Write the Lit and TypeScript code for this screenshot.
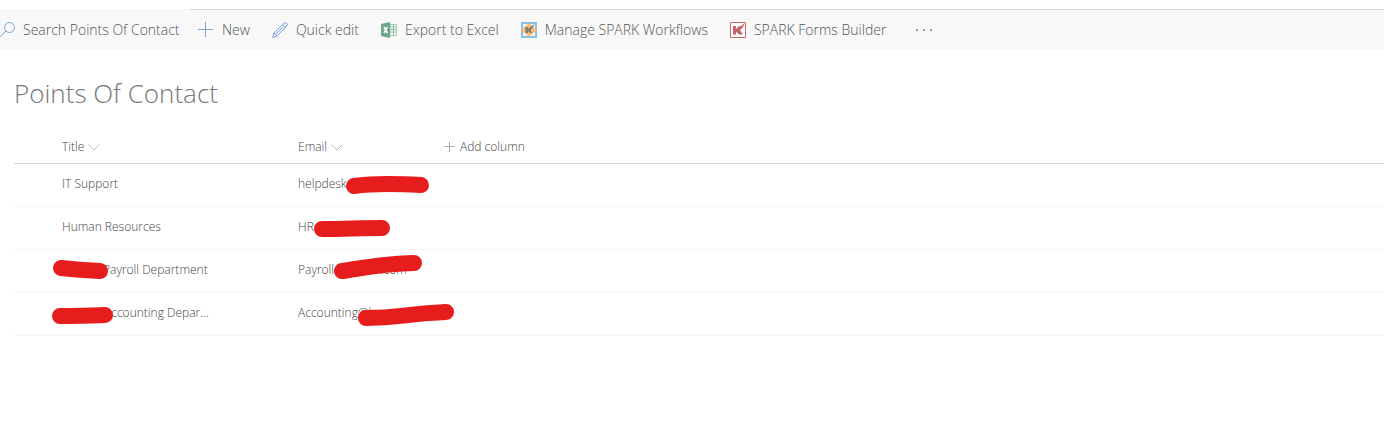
import { LitElement, html, css, svg } from "lit";
import { customElement, property } from "lit/decorators.js";

const icons = {
  search: svg`<circle cx="9.5" cy="5.5" r="5" fill="none" stroke="#7ba7d6"/><path d="M6 9 0 15" stroke="#7ba7d6" fill="none"/>`,
  add: svg`<path d="M7.5 0v15M0 7.500h15" stroke="#7ba7d6" fill="none"/>`,
  edit: svg`<path d="M.7 15.400 2 10.800 12 1.300a1.900 1.900 0 0 1 2.700 2.700L5 14ZM2 10.800 5 14M10.700 2.500l2.900 2.900M4 12l7.500-7.500" stroke="#7d9fdc" fill="none"/>`,
  excel: svg`<path d="M9 2.500h6.500v11H9z" fill="#fff" stroke="#a9cab7"/><path d="M9 5h6M9 7.500h6M9 10h6M12.500 3v11" stroke="#8fb9a1"/><path d="M0 2 9 0v16l-9-2Z" fill="#6fa888"/><path d="m3 5 3.500 6m0-6L3 11" stroke="#fff" stroke-width="1.500" fill="none"/>`,
  workflow: svg`<path d="M1 1h14v14H1z" fill="#f8f8f8" stroke="#86bfe6" stroke-width="2"/><path d="m8 1 8 7-8 7-8-7Z" fill="#f8bd76"/><path d="M4.500 5H7v2l3.500-3L14 2l-3 4.500-1.500 1.500 2 3H9L7 9v2H4.500Z" fill="#857d75"/>`,
  forms: svg`<path d="M.5 .5h15v15H.5z" fill="#fff" stroke="#c9696c"/><path d="M3 4h3v3l3-3 1 .500L15 1l-2.500 5L10 8l3 4.500H9L6 9.500v3H3Z" fill="#c4656a"/>`,
};

interface Contact {
  title: string;
  titleHidden?: number;
  titleMark?: string;
  email: string;
  emailHidden?: number;
  emailTail?: string;
  emailMark: string;
}

const contacts: Contact[] = [
  { title: "IT Support", email: "helpdesk", emailMark: "M64 22C85 19 112 20 131 21" },
  { title: "Human Resources", email: "HR", emailMark: "M32 22C55 22 70 21 92 21" },
  {
    title: "Payroll Department", titleHidden: 41, titleMark: "M7 18Q25 20 46 21",
    email: "Payroll@", emailHidden: 36, emailTail: ".com", emailMark: "M52 21C78 17 100 13 124 13",
  },
  {
    title: "Accounting Depar...", titleHidden: 42, titleMark: "M6 23Q25 23 51 22",
    email: "Accounting@k", emailMark: "M76 25C112 25 110 21 156 19",
  },
];

@customElement("command-button")
class CommandButton extends LitElement {
  @property() icon: keyof typeof icons = "add";
  @property() label = "";

  static styles = css`
    :host { display: flex; }
    .button {
      display: flex;
      align-items: center;
      gap: 8px;
      padding: 0;
      border: 0;
      background: none;
      color: #555;
      font: 300 14px/20px "Open Sans", "Noto Sans", sans-serif;
      white-space: nowrap;
      cursor: pointer;
    }
    .icon { width: 16px; height: 16px; flex: none; overflow: visible; }
  `;

  render() {
    return html`<button class="button" type="button">
      <svg class="icon" viewBox="0 0 16 16" aria-hidden="true">${icons[this.icon]}</svg>
      <span>${this.label}</span>
    </button>`;
  }
}

@customElement("app-root")
class AppRoot extends LitElement {
  static styles = css`
    :host {
      display: block;
      background: #fff;
      color: #444;
      font: 300 12px/16px "Open Sans", "Noto Sans", sans-serif;
    }
    .bar { display: flex; height: 41px; margin-top: 9px; background: #f8f8f8; }
    .search { display: flex; align-items: center; gap: 8px; width: 190px; }
    .search-icon { width: 15px; height: 16px; flex: none; overflow: visible; }
    .search-input {
      flex: 1;
      min-width: 0;
      padding: 0;
      border: 0;
      outline: 0;
      background: none;
      color: #444;
      font: 300 14px/20px "Open Sans", "Noto Sans", sans-serif;
    }
    .search-input::placeholder { color: #555; opacity: 1; }
    .commands {
      flex: 1;
      display: flex;
      gap: 22px;
      padding-left: 8px;
      border-top: 1px solid #dadada;
    }
    .more {
      padding: 0;
      margin-left: 8px;
      border: 0;
      background: none;
      color: #888;
    }
    .more-icon { display: block; width: 16px; height: 4px; }
    .content { padding: 23px 0 0 14px; }
    .heading { margin: 0; color: #777; font-size: 26px; line-height: 40px; font-weight: 300; }
    .list { width: 100%; margin-top: 18px; border-collapse: separate; border-spacing: 0; table-layout: fixed; }
    .select-col { width: 40px; }
    .title-col { width: 236px; }
    .email-col { width: 146px; }
    .head { height: 32px; padding: 0 8px; border-bottom: 1px solid #d6d6d6; text-align: left; font-weight: 300; }
    .head-button {
      display: flex;
      align-items: center;
      gap: 4px;
      padding: 0;
      border: 0;
      background: none;
      color: inherit;
      font: inherit;
    }
    .chevron { width: 12px; height: 8px; }
    .plus { width: 12px; height: 12px; }
    .cell { position: relative; height: 42px; padding: 0 8px; border-bottom: 1px solid #f5f5f5; white-space: nowrap; }
    .text { display: flex; padding-bottom: 2px; }
    .mark { position: absolute; left: 0; top: 0; width: 170px; height: 42px; overflow: visible; pointer-events: none; }
  `;

  private mark(path?: string) {
    return path
      ? html`<svg class="mark" viewBox="0 0 170 42" aria-hidden="true">
          <path d=${path} fill="none" stroke="#e71d1d" stroke-width="16" stroke-linecap="round" />
        </svg>`
      : "";
  }

  private gap(width?: number) {
    return width ? html`<span style="width:${width}px"></span>` : "";
  }

  private sortable(label: string) {
    return html`<button class="head-button" type="button">
      ${label}
      <svg class="chevron" viewBox="0 0 12 8" aria-hidden="true"><path d="m.5 1.500 5.500 5.500 5.500-5.500" fill="none" stroke="#bbb" /></svg>
    </button>`;
  }

  render() {
    return html`
      <div class="bar">
        <label class="search">
          <svg class="search-icon" viewBox="0 0 15 16" aria-hidden="true">${icons.search}</svg>
          <input class="search-input" type="text" aria-label="Search Points Of Contact" placeholder="Search Points Of Contact" />
        </label>
        <nav class="commands">
          <command-button icon="add" label="New"></command-button>
          <command-button icon="edit" label="Quick edit"></command-button>
          <command-button icon="excel" label="Export to Excel"></command-button>
          <command-button icon="workflow" label="Manage SPARK Workflows"></command-button>
          <command-button icon="forms" label="SPARK Forms Builder"></command-button>
          <button class="more" type="button" aria-label="More">
            <svg class="more-icon" viewBox="0 0 16 4" aria-hidden="true">
              <path d="M0 1h2v2H0zM7 1h2v2H7zM14 1h2v2h-2z" fill="#999" />
            </svg>
          </button>
        </nav>
      </div>
      <main class="content">
        <h1 class="heading">Points Of Contact</h1>
        <table class="list">
          <colgroup>
            <col class="select-col" />
            <col class="title-col" />
            <col class="email-col" />
            <col />
          </colgroup>
          <thead>
            <tr>
              <td class="head"></td>
              <th class="head" scope="col">${this.sortable("Title")}</th>
              <th class="head" scope="col">${this.sortable("Email")}</th>
              <th class="head" scope="col">
                <button class="head-button" type="button">
                  <svg class="plus" viewBox="0 0 12 12" aria-hidden="true"><path d="M5.500 1v10M.5 5.500h10" fill="none" stroke="#aaa" /></svg>
                  Add column
                </button>
              </th>
            </tr>
          </thead>
          <tbody>
            ${contacts.map(
              (c) => html`<tr>
                <td class="cell"></td>
                <td class="cell"><div class="text">${this.gap(c.titleHidden)}${c.title}</div>${this.mark(c.titleMark)}</td>
                <td class="cell"><div class="text">${c.email}${this.gap(c.emailHidden)}${c.emailTail ?? ""}</div>${this.mark(c.emailMark)}</td>
                <td class="cell"></td>
              </tr>`
            )}
          </tbody>
        </table>
      </main>
    `;
  }
}
